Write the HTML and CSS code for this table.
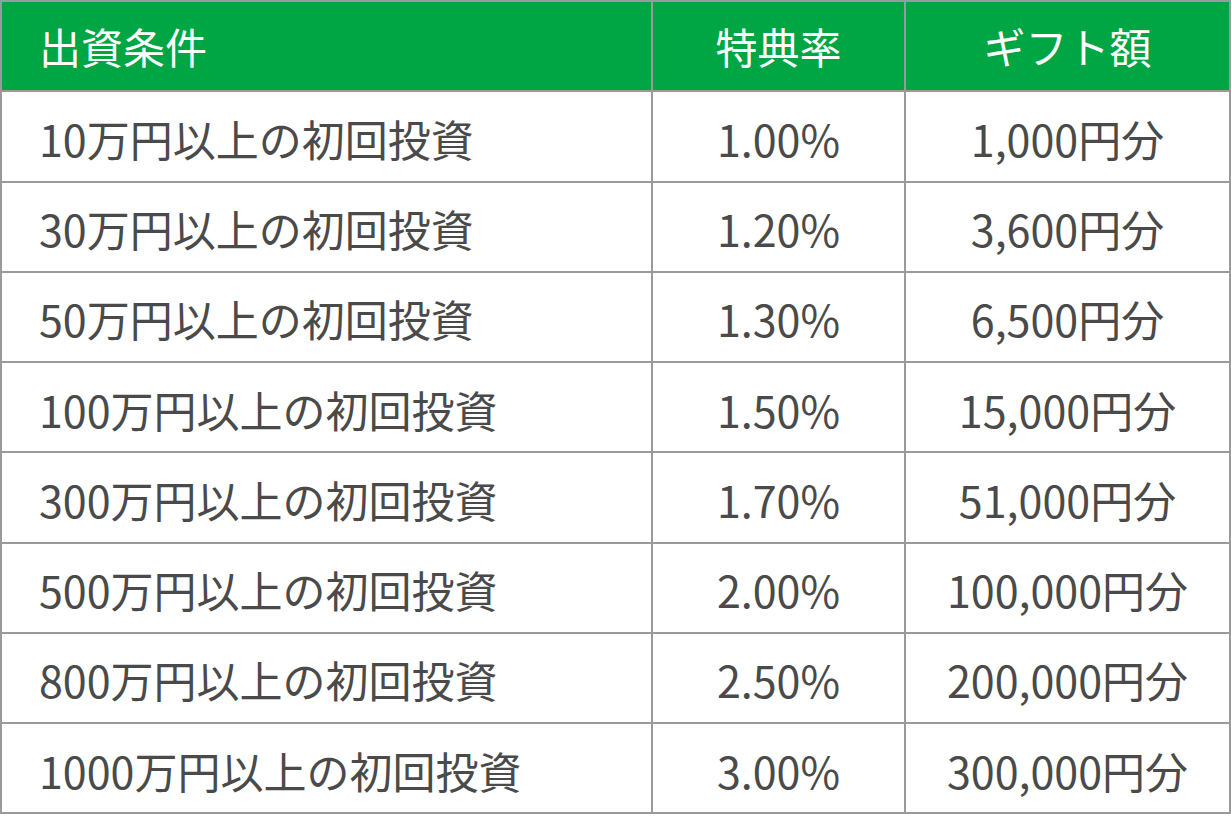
FILE: index.html
```html
<!DOCTYPE html>
<html lang="ja">
<head>
<meta charset="utf-8">
<link rel="stylesheet" href="styles.css">
</head>
<body>
<table class="gift-table">
  <colgroup>
    <col class="c1"><col class="c2"><col class="c3">
  </colgroup>
  <thead>
    <tr><th class="left">出資条件</th><th>特典率</th><th>ギフト額</th></tr>
  </thead>
  <tbody>
    <tr><td class="left">10万円以上の初回投資</td><td>1.00%</td><td>1,000円分</td></tr>
    <tr><td class="left">30万円以上の初回投資</td><td>1.20%</td><td>3,600円分</td></tr>
    <tr><td class="left">50万円以上の初回投資</td><td>1.30%</td><td>6,500円分</td></tr>
    <tr><td class="left">100万円以上の初回投資</td><td>1.50%</td><td>15,000円分</td></tr>
    <tr><td class="left">300万円以上の初回投資</td><td>1.70%</td><td>51,000円分</td></tr>
    <tr><td class="left">500万円以上の初回投資</td><td>2.00%</td><td>100,000円分</td></tr>
    <tr><td class="left">800万円以上の初回投資</td><td>2.50%</td><td>200,000円分</td></tr>
    <tr><td class="left">1000万円以上の初回投資</td><td>3.00%</td><td>300,000円分</td></tr>
  </tbody>
</table>
</body>
</html>
```
FILE: styles.css
```css
html, body {
  margin: 0;
  padding: 0;
  background: #ffffff;
}
.gift-table {
  border-collapse: collapse;
  table-layout: fixed;
  width: 1229px;
  font-family: "Noto Sans CJK JP", "Noto Sans", sans-serif;
  font-size: 43px;
  color: #4a4a4a;
}
.c1 { width: 651px; }
.c2 { width: 253px; }
.c3 { width: 325px; }
.gift-table th,
.gift-table td {
  border: 2px solid #9a9a9a;
  height: 88.25px;
  padding: 0;
  text-align: center;
  vertical-align: middle;
  font-weight: 400;
  line-height: 1;
  white-space: nowrap;
}
.gift-table td {
  height: 84.25px;
  padding-top: 4px;
}
.gift-table th {
  background: #00a544;
  color: #ffffff;
  font-size: 42px;
}
.gift-table .left {
  text-align: left;
  padding-left: 37px;
}
```
